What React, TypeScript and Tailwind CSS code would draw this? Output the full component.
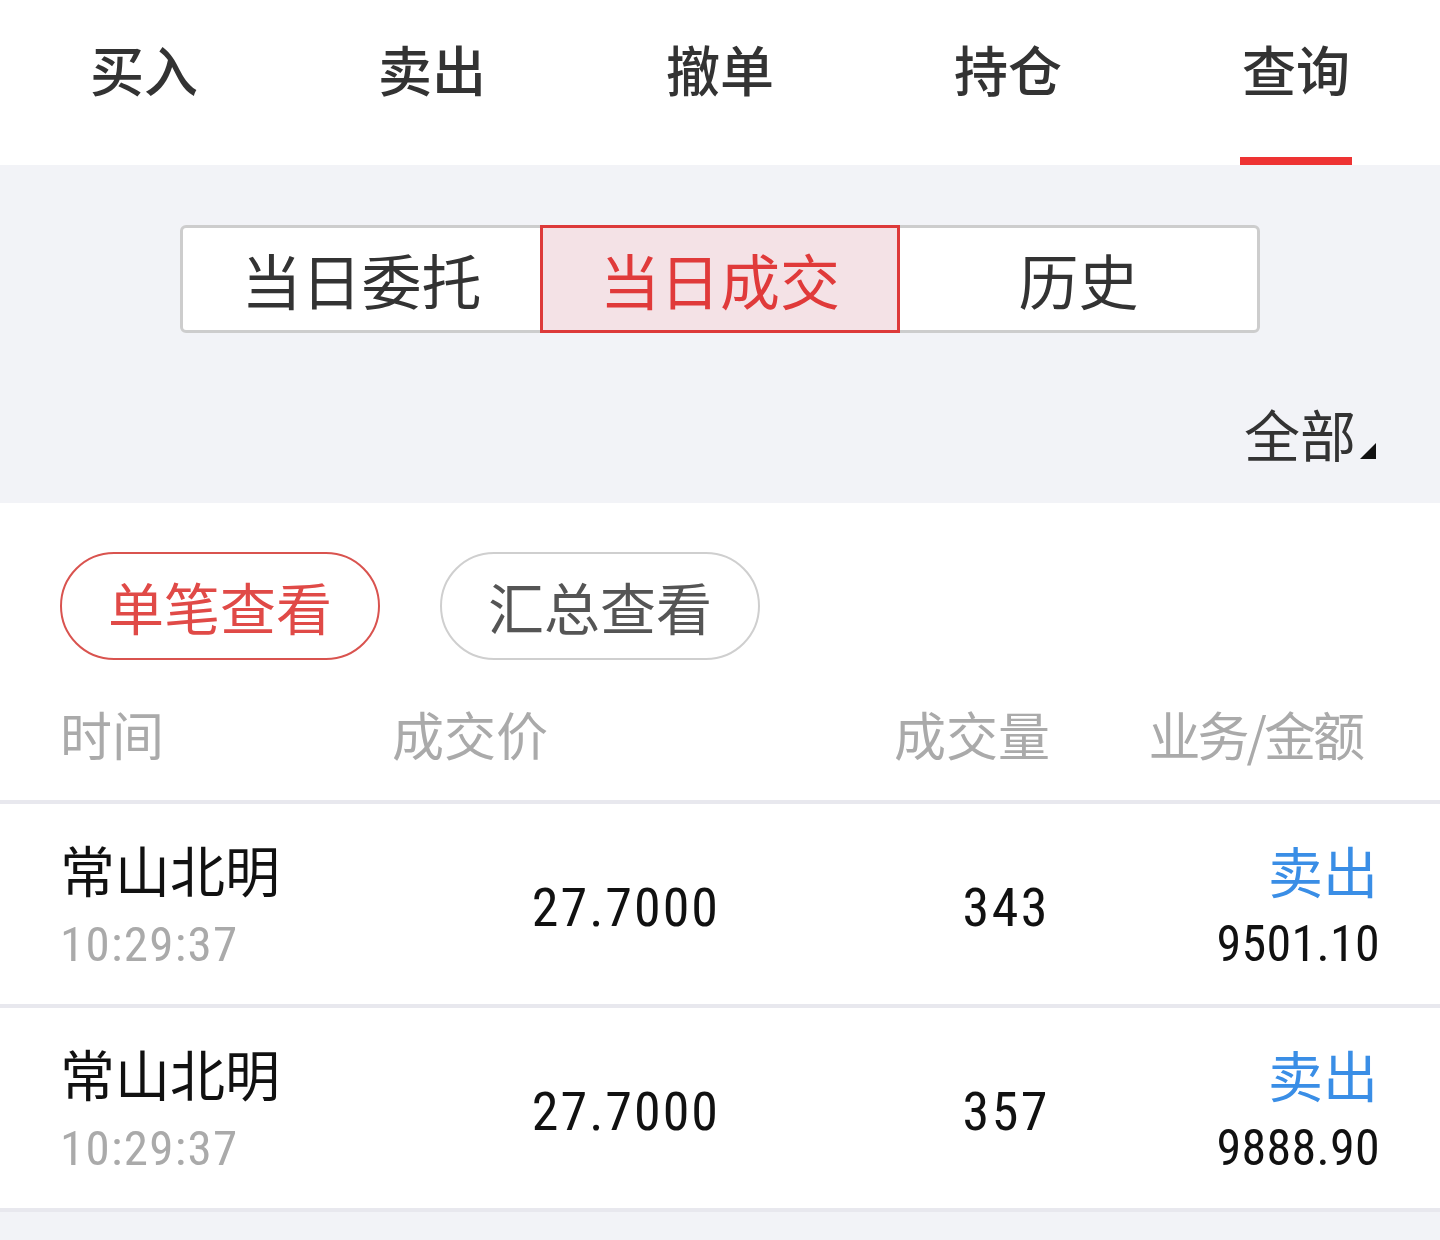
import React from "react";

const tabs = ["买入", "卖出", "撤单", "持仓", "查询"];

const rows = [
  { name: "常山北明", time: "10:29:37", price: "27.7000", vol: "343", biz: "卖出", amount: "9501.10" },
  { name: "常山北明", time: "10:29:37", price: "27.7000", vol: "357", biz: "卖出", amount: "9888.90" },
];

const NUM = "font-['Liberation_Sans_Narrow','Roboto_Condensed',Roboto,sans-serif]";

export default function App() {
  return (
    <div className="w-[1440px] h-[1240px] bg-[#f2f3f7] font-['Noto_Sans_CJK_SC',sans-serif] overflow-hidden">
      {/* top tabs */}
      <div className="h-[165px] bg-white flex">
        {tabs.map((t, i) => (
          <div key={t} className="flex-1 flex flex-col items-center">
            <div className="h-[157px] flex items-center pb-[19px] text-[54px] leading-[60px] font-medium text-[#333333]">
              {t}
            </div>
            {i === 4 ? <div className="w-[112px] h-[8px] bg-[#ee3333]" /> : null}
          </div>
        ))}
      </div>

      {/* gray filter section */}
      <div className="h-[338px] flex flex-col">
        <div className="mt-[60px] mx-auto w-[1080px] h-[108px] flex rounded-[6px] border-[3px] border-[#cdcdcd] bg-white">
          <div className="w-[357px] flex items-center justify-center text-[60px] leading-[60px] text-[#333333]">
            当日委托
          </div>
          <div className="relative w-[360px] -my-[3px] flex items-center justify-center border-[3px] border-[#dd3a3a] bg-[#f4e2e6] text-[60px] leading-[60px] text-[#e03a3a]">
            当日成交
          </div>
          <div className="flex-1 flex items-center justify-center text-[60px] leading-[60px] text-[#333333]">
            历史
          </div>
        </div>
        <div className="mt-[72px] flex justify-end pr-[64px]">
          <div className="flex items-end">
            <span className="text-[56px] leading-[56px] text-[#333333]">全部</span>
            <svg width="16" height="16" viewBox="0 0 16 16" className="ml-[4px] mb-[2px]">
              <polygon points="16,0 16,16 0,16" fill="#111111" />
            </svg>
          </div>
        </div>
      </div>

      {/* white content */}
      <div className="bg-white">
        <div className="pt-[49px] pl-[60px] flex gap-[60px]">
          <div className="w-[320px] h-[108px] rounded-full border-[2px] border-[#d9534f] flex items-center justify-center text-[56px] leading-[56px] text-[#e04a47]">
            单笔查看
          </div>
          <div className="w-[320px] h-[108px] rounded-full border-[2px] border-[#cfcfcf] flex items-center justify-center text-[56px] leading-[56px] text-[#555555]">
            汇总查看
          </div>
        </div>

        <div className="h-[140px] px-[60px] grid grid-cols-4 items-center text-[52px] leading-[56px] text-[#aaaaaa] pt-[8px]">
          <div>时间</div>
          <div className="pl-[2px]">成交价</div>
          <div className="text-right">成交量</div>
          <div className="text-right pr-[18px] tracking-[-3px]">业务/金额</div>
        </div>

        {rows.map((r, i) => (
          <div key={i}>
            <div className="h-[4px] bg-[#e8e8ee]" />
            <div className="h-[200px] px-[60px] grid grid-cols-4 items-center">
              <div className="flex flex-col">
                <div className="text-[55px] leading-[60px] text-[#111111]">{r.name}</div>
                <div className={`mt-[22px] text-[49px] leading-[50px] tracking-[1.3px] text-[#aaaaaa] ${NUM}`}>{r.time}</div>
              </div>
              <div className={`text-right mt-[6px] text-[54px] leading-[61px] tracking-[2px] text-[#111111] ${NUM}`}>{r.price}</div>
              <div className={`text-right mt-[6px] text-[54px] leading-[61px] tracking-[2.5px] text-[#111111] ${NUM}`}>{r.vol}</div>
              <div className="flex flex-col items-end">
                <div className="text-[55px] leading-[60px] text-[#3a8ee6] pr-[2px]">{r.biz}</div>
                <div className={`mt-[20px] text-[50px] leading-[50px] tracking-[0.3px] text-[#111111] ${NUM}`}>{r.amount}</div>
              </div>
            </div>
          </div>
        ))}
        <div className="h-[4px] bg-[#e8e8ee]" />
      </div>
    </div>
  );
}
